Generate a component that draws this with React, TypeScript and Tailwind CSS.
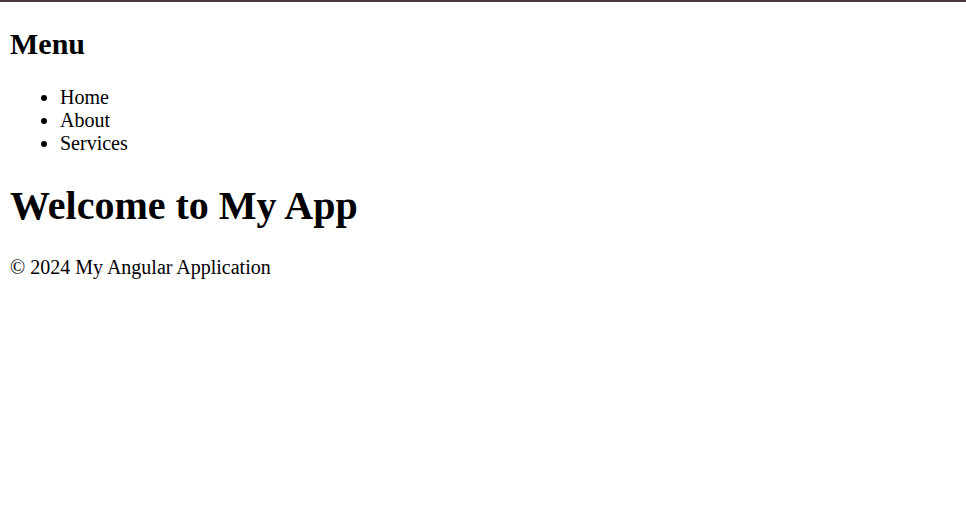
export default function App() {
  return (
    <div className="min-h-[512px] bg-white font-['Liberation_Serif',serif] text-[20px] leading-[normal] text-black">
      <div className="border-t-2 border-[#4a3a3f] px-[10px]">
        <nav>
          <h2 className="my-[25px] text-[30px] font-bold">Menu</h2>
          <ul className="mb-[20px] list-disc pl-[50px]">
            <li>Home</li>
            <li>About</li>
            <li>Services</li>
          </ul>
        </nav>
        <main>
          <h1 className="my-[26.8px] text-[40px] font-bold">Welcome to My App</h1>
        </main>
        <footer>
          <p className="my-[20px]">© 2024 My Angular Application</p>
        </footer>
      </div>
    </div>
  );
}
